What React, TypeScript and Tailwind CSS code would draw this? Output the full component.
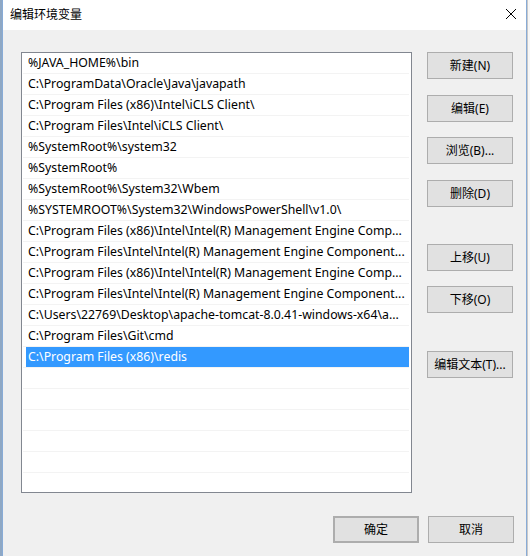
const paths = [
  "%JAVA_HOME%\\bin",
  "C:\\ProgramData\\Oracle\\Java\\javapath",
  "C:\\Program Files (x86)\\Intel\\iCLS Client\\",
  "C:\\Program Files\\Intel\\iCLS Client\\",
  "%SystemRoot%\\system32",
  "%SystemRoot%",
  "%SystemRoot%\\System32\\Wbem",
  "%SYSTEMROOT%\\System32\\WindowsPowerShell\\v1.0\\",
  "C:\\Program Files (x86)\\Intel\\Intel(R) Management Engine Comp...",
  "C:\\Program Files\\Intel\\Intel(R) Management Engine Component...",
  "C:\\Program Files (x86)\\Intel\\Intel(R) Management Engine Comp...",
  "C:\\Program Files\\Intel\\Intel(R) Management Engine Component...",
  "C:\\Users\\22769\\Desktop\\apache-tomcat-8.0.41-windows-x64\\a...",
  "C:\\Program Files\\Git\\cmd",
  "C:\\Program Files (x86)\\redis",
  "",
  "",
  "",
  "",
  "",
  "",
];

const SELECTED = 14;

function WinButton({ label, className = "" }: { label: string; className?: string }) {
  return (
    <button
      type="button"
      className={
        "w-[86px] h-[27px] bg-[#e1e1e1] border border-[#adadad] text-[12px] text-black leading-none flex items-center justify-center " +
        className
      }
    >
      {label}
    </button>
  );
}

export default function App() {
  return (
    <div
      className="w-[530px] h-[556px] flex bg-[#e9edf2] overflow-hidden"
      style={{ fontFamily: "'Noto Sans', 'Noto Sans CJK SC', sans-serif" }}
    >
      <div className="w-[2px] h-full bg-[#8fa8c4]" />
      <div className="w-[525px] h-full flex flex-col border-x border-[#88abd6] bg-[#f0f0f0]">
        {/* title bar */}
        <div className="h-[30px] bg-white flex items-center justify-between pl-[7px] pr-[9px]">
          <span className="text-[12px] text-black">编辑环境变量</span>
          <svg width="12" height="12" viewBox="0 0 12 12" className="mb-[2px]">
            <path d="M1 1 L11 11 M11 1 L1 11" stroke="#000" strokeWidth="1" fill="none" />
          </svg>
        </div>

        <div className="flex pl-[18px] pt-[22px]">
          {/* path list */}
          <div className="w-[391px] h-[441px] border border-[#828790] bg-white overflow-hidden">
            {paths.map((p, i) => (
              <div
                key={i}
                className="ml-[1px] w-[386px] h-[21px] border-b border-[#f3f3f3] pl-[3px]"
              >
                <div
                  className={
                    i === SELECTED
                      ? "h-[20px] bg-[#3399ff] text-white pl-[2px] text-[12.3px] leading-[20px] whitespace-nowrap overflow-hidden"
                      : "h-[20px] text-black pl-[2px] text-[12.3px] leading-[20px] whitespace-nowrap overflow-hidden"
                  }
                >
                  {p}
                </div>
              </div>
            ))}
          </div>

          {/* side buttons */}
          <div className="ml-[15px] flex flex-col">
            <WinButton label="新建(N)" />
            <WinButton label="编辑(E)" className="mt-[16px]" />
            <WinButton label="浏览(B)..." className="mt-[15px]" />
            <WinButton label="删除(D)" className="mt-[16px]" />
            <WinButton label="上移(U)" className="mt-[37px]" />
            <WinButton label="下移(O)" className="mt-[15px]" />
            <WinButton label="编辑文本(T)..." className="mt-[38px]" />
          </div>
        </div>

        {/* dialog buttons */}
        <div className="flex justify-end gap-[9px] pr-[12px] mt-[23px]">
          <WinButton label="确定" className="border-2 border-[#0078d7]" />
          <WinButton label="取消" />
        </div>
      </div>
      <div className="w-[3px] h-full bg-[#f7f7f7] border-l border-[#c9c9c9]" />
    </div>
  );
}
